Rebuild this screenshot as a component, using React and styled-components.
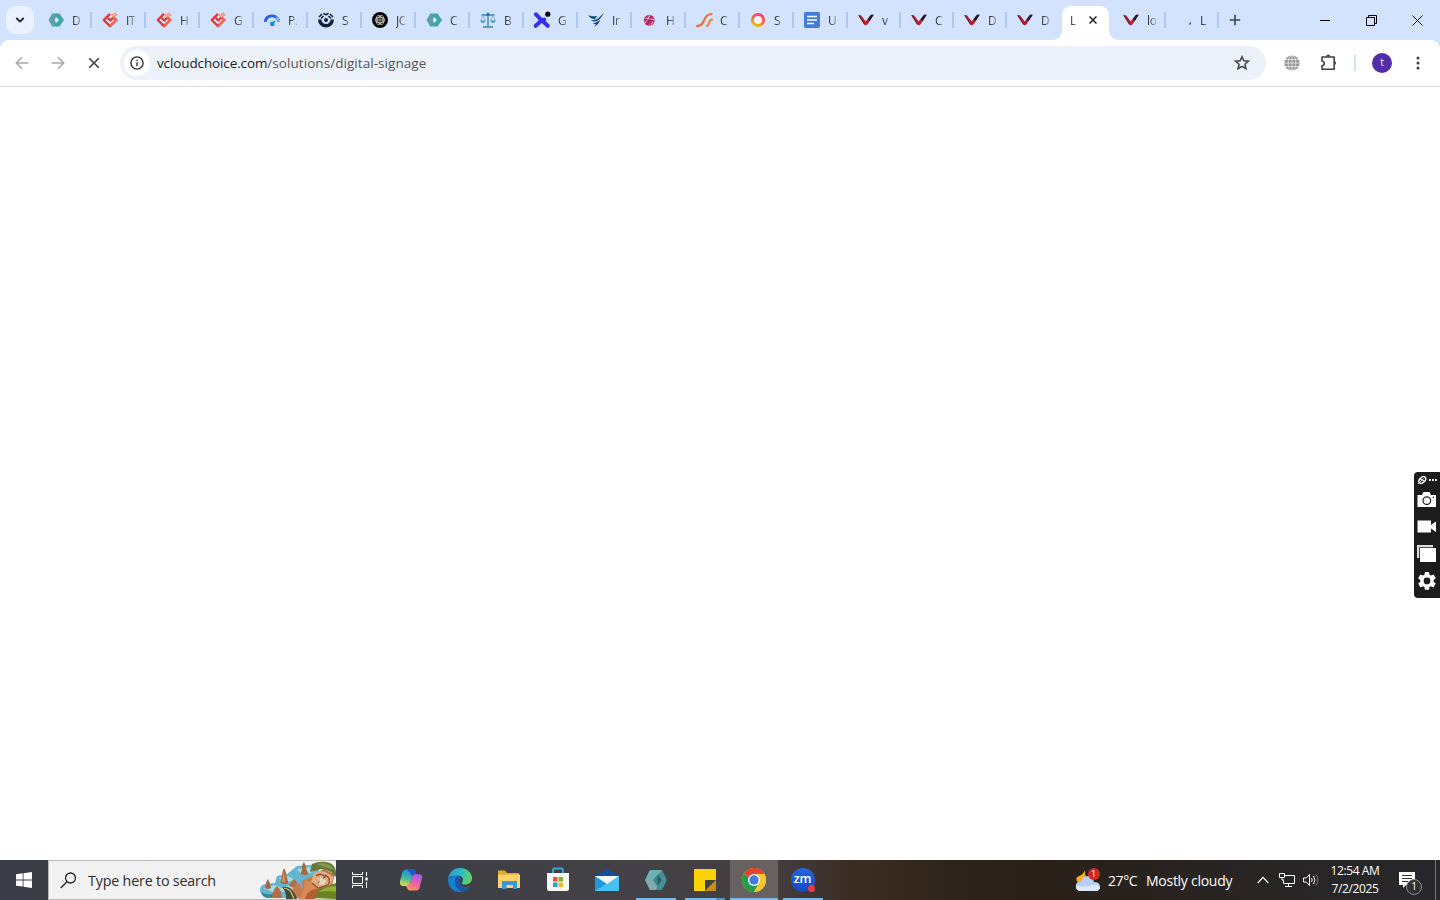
import styled, { createGlobalStyle } from "styled-components";

const GlobalStyle = createGlobalStyle`
  * {
    box-sizing: border-box;
  }
  body {
    margin: 0;
    overflow: hidden;
    font-family: "Open Sans", "Noto Sans", sans-serif;
  }
  svg {
    display: block;
    flex: none;
  }
`;

const Hexagon = () => (
  <svg width="16" height="16" viewBox="0 0 16 16">
    <path d="M4.5 1.5h7L16 8l-4.5 6.5h-7L.5 8z" fill="#3fa5a5" />
    <path d="M1 8l3.5-6.5L8 4v8l-3.5 2.5z" fill="#5b9fa8" />
    <path d="M8 5l3 3-3 3-1.2-3z" fill="#d9f3f4" />
  </svg>
);

const RedDiamond = () => (
  <svg width="16" height="16" viewBox="0 0 16 16" fill="none">
    <path d="M8 1.8L1.8 8 8 14.2 14.2 8l-2.700-2.700L8.300 8.500 5.800 6" stroke="#e2373b" strokeWidth="2.4" strokeLinejoin="round" />
    <path d="M8 14.2L14.2 8l-2.700-2.700" stroke="#ee6a4a" strokeWidth="2.4" />
    <path d="M9 3.500L14 1M10.500 5l5-2.500" stroke="#f29a74" strokeWidth="1.4" />
  </svg>
);

const Gauge = () => (
  <svg width="16" height="16" viewBox="0 0 16 16" fill="none">
    <path d="M1 10C2.5 2.5 12.5 1.5 15 9.5" stroke="#2362e8" strokeWidth="2.8" />
    <path d="M12 5.500q2.300 1.500 3 4" stroke="#83aafa" strokeWidth="2.8" />
    <path d="M4.500 11.500a4 4 0 017.300-1" stroke="#bcd5ff" strokeWidth="1.3" />
    <circle cx="8.300" cy="12" r="2.300" fill="#168cd8" />
    <path d="M8.500 12l2.300-3" stroke="#168cd8" strokeWidth="1.5" />
  </svg>
);

const People = () => (
  <svg width="16" height="16" viewBox="0 0 16 16" fill="none">
    <path d="M1.700 7.500a6.300 6.300 0 0012.600 0" stroke="#13213d" strokeWidth="3.4" />
    <path d="M1 5l3-3M5.500 1.300Q8 4 10.500 1.300M12 2l3 3M3 6.500L5.500 4M13 6.500L10.500 4" stroke="#13213d" strokeWidth="1.6" />
    <circle cx="8" cy="8" r="2" fill="#13213d" />
  </svg>
);

const Knot = () => (
  <svg width="16" height="16" viewBox="0 0 16 16" fill="none">
    <circle cx="8" cy="8" r="8" fill="#090909" />
    <g stroke="#d6cfc3" strokeWidth=".8">
      <ellipse cx="8" cy="8" rx="4.900" ry="2.700" />
      <ellipse cx="8" cy="8" rx="4.900" ry="2.700" transform="rotate(60 8 8)" />
      <ellipse cx="8" cy="8" rx="4.900" ry="2.700" transform="rotate(120 8 8)" />
      <circle cx="8" cy="8" r="1.200" />
    </g>
  </svg>
);

const Scales = () => (
  <svg width="16" height="16" viewBox="0 0 16 16" fill="none">
    <path d="M8 .5v14M1.5 3h13M3 15h10" stroke="#3486b5" strokeWidth="1.4" />
    <path d="M3 3L.8 9M3 3l2.4 6M13 3l-2.4 6M13 3l2.2 6" stroke="#68aad0" strokeWidth=".8" />
    <path d="M.3 8.5h5.4Q5 11 3 11T.3 8.5zM10.3 8.5h5.4Q15 11 13 11t-2.7-2.5z" fill="#4b9ac6" />
    <circle cx="8" cy="2.5" r="1.5" fill="#276f9e" />
  </svg>
);

const CrossDot = () => (
  <svg width="18" height="18" viewBox="0 0 18 18" fill="none">
    <path d="M3 3.3l4.2 4.5q1.7 1.6 4 .8M7.2 8.8q1.5 0 3.3 2l4.2 4M2.7 14.8l5-4.6" stroke="#3b2df2" strokeWidth="4" strokeLinecap="round" />
    <circle cx="14.8" cy="3.2" r="2.6" fill="#090a18" />
  </svg>
);

const Wing = () => (
  <svg width="16" height="16" viewBox="0 0 16 16">
    <path d="M0 3.2q5 1.5 9.500.8L6.500 7.500Q2 6.500 0 3.200z" fill="#155380" />
    <path d="M2.500 8q4.500.8 7.500-1.500Q13 4.200 15.800.8 13.500 6.500 9 9q-3 1.500-6.500-1z" fill="#1b4575" />
    <path d="M4.500 11.500Q9 11 12 7.500 11 13 5.500 15q2-1.500 2.500-2.800z" fill="#163d6b" />
  </svg>
);

const Ball = () => (
  <svg width="16" height="16" viewBox="0 0 16 16" fill="none">
    <circle cx="7.3" cy="8.3" r="5.5" fill="#c7376e" />
    <path d="M3 11L8 3M9 13l3.3-6" stroke="#f3bdd5" strokeWidth=".9" />
    <path d="M5 12.5l4.500-8.500M2.500 7.500l9.500 1.500" stroke="#7c285d" strokeWidth="1.1" />
    <path d="M3.500 6.500l8.500 1" stroke="#f3bdd5" strokeWidth=".8" />
  </svg>
);

const Swoosh = () => (
  <svg width="17" height="16" viewBox="0 0 17 16" fill="none">
    <path d="M1 14q5 0 7-5.500 2-6 7.500-6.500" stroke="#eb7038" strokeWidth="2.2" strokeLinecap="round" />
    <path d="M11 13.800q1.500-.5 2-3 .5-2.500 3-3.300" stroke="#f18c42" strokeWidth="2.4" strokeLinecap="round" />
  </svg>
);

const Ring = () => (
  <svg width="16" height="16" viewBox="0 0 16 16" fill="none">
    <defs>
      <linearGradient id="ring" x1=".75" y1="0" x2=".3" y2="1">
        <stop offset="0" stopColor="#f13c87" />
        <stop offset=".5" stopColor="#fa693d" />
        <stop offset="1" stopColor="#e8bd0e" />
      </linearGradient>
    </defs>
    <circle cx="8" cy="8" r="5.6" fill="#fff3f0" stroke="url(#ring)" strokeWidth="3" />
  </svg>
);

const Doc = () => (
  <svg width="16" height="16" viewBox="0 0 16 16">
    <rect width="16" height="16" rx="1.7" fill="#427ddd" />
    <path d="M3 4.5h10M3 8h10M3 11.5h7" stroke="#fff" strokeWidth="1.7" />
  </svg>
);

const Vee = () => (
  <svg width="16" height="16" viewBox="0 0 16 16">
    <path d="M.3 3.3h2.600l4.900 6.200 1 3.500q-1.800.5-2.900-1z" fill="#b81f33" />
    <path d="M.3 3.3h1.400l5.700 9.800q-.8-.2-1.500-1.100z" fill="#6b1a28" />
    <path d="M15.700 2.8h-2.600L7.600 9.500v3.600q1.300.2 2.200-1z" fill="#b81f33" />
    <path d="M15.700 2.8h-2.600l-3.200 3.900 1.700 2.500z" fill="#101c31" />
  </svg>
);

const LoadingDot = () => (
  <svg width="16" height="16" viewBox="0 0 16 16">
    <path d="M13 12l1.800-2.600V12l-1 1z" fill="#28476d" />
  </svg>
);

const leftTabs = [
  { icon: Hexagon, title: "D" },
  { icon: RedDiamond, title: "IT" },
  { icon: RedDiamond, title: "H" },
  { icon: RedDiamond, title: "G" },
  { icon: Gauge, title: "P." },
  { icon: People, title: "S" },
  { icon: Knot, title: "JO" },
  { icon: Hexagon, title: "C" },
  { icon: Scales, title: "B" },
  { icon: CrossDot, title: "G" },
  { icon: Wing, title: "Ir" },
  { icon: Ball, title: "H" },
  { icon: Swoosh, title: "C" },
  { icon: Ring, title: "S" },
  { icon: Doc, title: "U" },
  { icon: Vee, title: "v", narrow: true },
  { icon: Vee, title: "C", narrow: true },
  { icon: Vee, title: "D", narrow: true },
  { icon: Vee, title: "D", narrow: true, last: true },
];

const rightTabs = [
  { icon: Vee, title: "lo", narrow: true },
  { icon: LoadingDot, title: "L", narrow: true },
];

const TabItem = ({ icon: Icon, title, narrow, last }) => (
  <Tab $narrow={narrow} $last={last}>
    <Favicon>
      <Icon />
    </Favicon>
    <TabTitle>{title}</TabTitle>
  </Tab>
);

const BrowserTabs = () => (
  <TabStrip>
    <TabSearch>
      <svg width="10" height="6" viewBox="0 0 10 6" fill="none">
        <path d="M1.3 1L5 4.6 8.7 1" stroke="#1d1f24" strokeWidth="1.8" />
      </svg>
    </TabSearch>
    {leftTabs.map((tab, index) => (
      <TabItem key={index} {...tab} />
    ))}
    <ActiveTab>
      <ActiveTitle>L</ActiveTitle>
      <svg width="8" height="8" viewBox="0 0 8 8">
        <path d="M.5.5l7 7M7.500.5l-7 7" stroke="#202124" strokeWidth="1.5" />
      </svg>
    </ActiveTab>
    {rightTabs.map((tab, index) => (
      <TabItem key={index} {...tab} />
    ))}
    <NewTab>
      <svg width="12" height="12" viewBox="0 0 12 12">
        <path d="M6 .8v10.400M.8 6h10.400" stroke="#3b4552" strokeWidth="1.6" />
      </svg>
    </NewTab>
    <WindowButtons>
      <svg width="11" height="11" viewBox="0 0 11 11">
        <path d="M0 5.500h10" stroke="#000" />
      </svg>
      <svg width="11" height="11" viewBox="0 0 11 11" fill="none">
        <path d="M.5 2.500h8v8h-8zM2.500 2.500v-2h8v8h-2" stroke="#000" />
      </svg>
      <svg width="11" height="11" viewBox="0 0 11 11">
        <path d="M.5.5l10 10M10.500.5l-10 10" stroke="#111" />
      </svg>
    </WindowButtons>
  </TabStrip>
);

const BrowserToolbar = () => (
  <ToolbarBack>
    <Toolbar>
      <NavButtons>
        <svg width="14" height="14" viewBox="0 0 14 14" fill="none">
          <path d="M13.5 7H1.500M7 1.300L1.300 7 7 12.700" stroke="#a6a8ab" strokeWidth="1.5" />
        </svg>
        <svg width="14" height="14" viewBox="0 0 14 14" fill="none">
          <path d="M.5 7h12M7 1.300L12.700 7 7 12.700" stroke="#a6a8ab" strokeWidth="1.5" />
        </svg>
        <svg width="14" height="14" viewBox="0 0 14 14" fill="none">
          <path d="M2.200 2.200l9.600 9.600M11.800 2.200l-9.600 9.600" stroke="#3c4043" strokeWidth="1.6" />
        </svg>
      </NavButtons>
      <AddressBar>
        <SiteInfo>
          <svg width="14" height="14" viewBox="0 0 14 14" fill="none">
            <circle cx="7" cy="7" r="6.1" stroke="#303236" strokeWidth="1.4" />
            <path d="M7 6.200v4M7 3.700v1.400" stroke="#303236" strokeWidth="1.4" />
          </svg>
        </SiteInfo>
        <Url>
          <Host>vcloudchoice.com</Host>/solutions/digital-signage
        </Url>
        <svg width="16" height="16" viewBox="0 0 16 16" fill="none">
          <path
            d="M8 1.700l1.800 4.100 4.600.4-3.500 3 1.100 4.500L8 11.300l-4 2.400 1.100-4.500-3.500-3 4.600-.4z"
            stroke="#3e4146"
            strokeWidth="1.5"
          />
        </svg>
      </AddressBar>
      <Extensions>
        <svg width="16" height="16" viewBox="0 0 16 16" fill="none">
          <circle cx="8" cy="8" r="7.6" fill="#949494" />
          <path d="M1 4.500h14M.5 8h15M1 11.500h14M8 0v16" stroke="#ececec" strokeWidth=".8" />
          <ellipse cx="8" cy="8" rx="3.9" ry="7.6" stroke="#ececec" strokeWidth=".8" />
        </svg>
        <svg width="18" height="18" viewBox="0 0 18 18" fill="none">
          <path
            d="M2 3h12.200v12.200H2v-3.400q2.200-.5 2.200-2.400T2 7z"
            stroke="#3e4146"
            strokeWidth="1.6"
            strokeLinejoin="round"
          />
          <path d="M6.200 2.800a2 2.200 0 014 0zM14.500 7a2.200 2.200 0 010 4.200z" fill="#3e4146" />
        </svg>
        <Separator />
        <Avatar>t</Avatar>
        <svg width="4" height="16" viewBox="0 0 4 16" fill="#3b3d40">
          <circle cx="2" cy="3" r="1.5" />
          <circle cx="2" cy="8" r="1.5" />
          <circle cx="2" cy="13" r="1.5" />
        </svg>
      </Extensions>
    </Toolbar>
  </ToolbarBack>
);

const CaptureTools = () => (
  <CapturePanel>
    <svg width="20" height="10" viewBox="0 0 20 10" fill="none">
      <ellipse cx="5.3" cy="5" rx="4" ry="2.6" transform="rotate(-45 5.3 5)" stroke="#fff" strokeWidth="1.4" />
      <path d="M2.300 3.500l5 2.500M3.200 7l3.500-3.500M1.200 9l2-2" stroke="#fff" />
      <path d="M12 5h1.800M15 5h1.800M18 5h1.800" stroke="#fff" strokeWidth="1.8" />
    </svg>
    <svg width="20" height="18" viewBox="0 0 20 18">
      <path d="M.5 4H5l1.500-3h6L14 4h5v12H.5z" fill="#fff" />
      <circle cx="9.8" cy="9.7" r="3.8" fill="#fff" stroke="#222" strokeWidth="1.3" />
      <circle cx="16.4" cy="6.3" r=".8" fill="#222" />
    </svg>
    <svg width="20" height="18" viewBox="0 0 20 18" fill="#fff">
      <path d="M.5 2.500H14V7l5-3.500V14l-5-3.500v4H.5z" />
    </svg>
    <svg width="20" height="18" viewBox="0 0 20 18">
      <path d="M0 0h16v2.200H2.200V13H0z" fill="#ddd" />
      <path d="M3 3h16v14H3z" fill="#fff" />
    </svg>
    <svg width="20" height="20" viewBox="0 0 24 24" fill="#fff">
      <path d="M19.900 12.900l.1-1-.1-1 2.300-1.800c.2-.2.3-.5.1-.7l-2.200-3.800c-.1-.2-.4-.3-.7-.2l-2.700 1.100-1.800-1-.4-2.800c0-.3-.3-.5-.5-.5h-4c-.3 0-.5.2-.6.5L9 4.500l-1.800 1-2.700-1.100c-.3-.1-.6 0-.7.2L1.600 8.400c-.1.2-.1.5.1.7L4 10.900v2l-2.300 1.800c-.2.2-.2.5-.1.7l2.200 3.800c.1.2.4.3.7.2l2.700-1.100 1.800 1 .4 2.800c.1.3.3.5.6.5h4c.2 0 .5-.2.5-.5l.4-2.800 1.800-1 2.700 1.100c.3.1.6 0 .7-.2l2.200-3.800c.2-.2.1-.5-.1-.7zM12 15.900a4 4 0 110-8 4 4 0 010 8z" />
    </svg>
  </CapturePanel>
);

const Copilot = () => (
  <svg width="24" height="24" viewBox="0 0 24 24">
    <defs>
      <linearGradient id="copilotA" x1=".5" y1="0" x2=".3" y2="1">
        <stop offset="0" stopColor="#2187e9" />
        <stop offset=".5" stopColor="#39b8a0" />
        <stop offset="1" stopColor="#efd44c" />
      </linearGradient>
      <linearGradient id="copilotB" x1=".7" y1="0" x2=".3" y2="1">
        <stop offset="0" stopColor="#a35af3" />
        <stop offset=".55" stopColor="#ee62a3" />
        <stop offset="1" stopColor="#fb9857" />
      </linearGradient>
    </defs>
    <path d="M7 1.500h7q2 0 2.700 2L17.500 7H15q-1.500 0-2 2l-2 6.500q-.8 2.500-3 2.500H3.500Q.4 17.500 1 13L3.500 4Q4.300 1.500 7 1.500z" fill="url(#copilotA)" />
    <path d="M7 1.500h7q2 0 2.700 2L17.500 7H15q-1.300 0-1.800 1.500Q11 3 7 1.500z" fill="#1f57c4" />
    <path d="M17 22.500h-6q-2 0-2.800-2L7 17.800q3 .5 4-1.800l2-7q.8-2.800 3-2.800h4.500q3.300 0 2.500 4L20.500 20q-.8 2.500-3.500 2.500z" fill="url(#copilotB)" />
  </svg>
);

const Edge = () => (
  <svg width="26" height="26" viewBox="0 0 26 26">
    <defs>
      <linearGradient id="edgeTop" x1="0" y1=".3" x2="1" y2=".5">
        <stop offset="0" stopColor="#229bd8" />
        <stop offset=".55" stopColor="#33bcc2" />
        <stop offset="1" stopColor="#63d557" />
      </linearGradient>
    </defs>
    <path d="M1 12a12 12 0 0012 13c4.500 0 8-2 10-5.500-3 1.500-6 1.200-8.500-.5-2.500-2-3-5-1-7.500L10 6.500z" fill="#1580d0" />
    <path d="M9.500 9c-3.500 5.500-1 14 6 15.800 3.500-.8 6-2.800 7.500-5.300-3 1.500-6 1.200-8.500-.5-2.500-2-3-5-1-7.500z" fill="#1b55a8" />
    <path d="M1 12C2 4 8 1 13 1c8 0 12 6 12 10 0 5-4 6.500-7 6.500-4 0-3.500-1.500-2.500-3 1.500-3-1-6-4.500-6-5 0-9 1-10 3.500z" fill="url(#edgeTop)" />
  </svg>
);

const Folder = () => (
  <svg width="24" height="22" viewBox="0 0 24 22">
    <path d="M1 1.500h7l2 2.500h12v15H1z" fill="#e6a62b" />
    <path d="M1 5.500h22V19H1z" fill="#fbd368" />
    <path d="M5 12h15v8h-4v-4H9.500v4H5z" fill="#3b94dc" />
  </svg>
);

const Store = () => (
  <svg width="24" height="26" viewBox="0 0 24 26">
    <path d="M7 7V3q0-1.500 1.500-1.500h7Q17 1.500 17 3v4" fill="none" stroke="#35a9dc" strokeWidth="1.8" />
    <path d="M1 6h22v15.500q0 2.500-2.500 2.500h-17Q1 24 1 21.500z" fill="#f7f7f7" />
    <path d="M7 10h4.500v4.500H7z" fill="#ec542c" />
    <path d="M12.500 10H17v4.500h-4.500z" fill="#80b530" />
    <path d="M7 15.500h4.500V20H7z" fill="#29a1df" />
    <path d="M12.500 15.500H17V20h-4.500z" fill="#f2b526" />
  </svg>
);

const Mail = () => (
  <svg width="26" height="24" viewBox="0 0 26 24">
    <path d="M1 8l12-7.500L25 8v4H1z" fill="#134e9f" />
    <path d="M1 8h24v15H1z" fill="#1d9be2" />
    <path d="M1 23l14-9 10-6v15z" fill="#48c2f1" />
    <path d="M1 8h24l-12 8z" fill="#f4f4f4" />
  </svg>
);

const HexApp = () => (
  <svg width="24" height="22" viewBox="0 0 24 22">
    <path d="M6 1h12l5 10-5 10H6L1 11z" fill="#428f96" />
    <path d="M6 1h12l-4 4.500-5 5.500H1z" fill="#6cb0b6" />
    <path d="M1 11h8l4 6-1 4H6z" fill="#80a9b1" />
    <path d="M14 6l3.500 5-3.500 5.500L10.500 11z" fill="#275961" />
    <path d="M14 6v10.500L10.500 11z" fill="#3c7c84" />
  </svg>
);

const Sticky = () => (
  <svg width="24" height="24" viewBox="0 0 24 24">
    <path d="M1 1h22v22H1z" fill="#fbd304" />
    <path d="M23 12v11H12z" fill="#c78f15" />
    <path d="M12 12h11L12 23z" fill="#41413d" />
  </svg>
);

const Chrome = () => (
  <svg width="26" height="26" viewBox="0 0 26 26">
    <circle cx="13" cy="13" r="12" fill="#fac62c" />
    <path d="M13 13L2.600 7a12 12 0 0120.800 0z" fill="#e54234" />
    <path d="M13 13L2.600 7A12 12 0 0013 25l5.200-9z" fill="#269b4b" />
    <path d="M13 7h10.400q1.600 3 1.600 6A12 12 0 0113 25l5.200-9z" fill="#fac62c" />
    <circle cx="13" cy="13" r="6" fill="#fff" />
    <circle cx="13" cy="13" r="4.7" fill="#3b7de5" />
  </svg>
);

const Windows = () => (
  <svg width="16" height="16" viewBox="0 0 16 16" fill="#fff">
    <path d="M0 2.200l6.700-.9v6.200H0zM7.500 1.200L16 0v7.500H7.500zM0 8.400h6.700v6.200L0 13.700zM7.500 8.400H16V16l-8.500-1.200z" />
  </svg>
);

const Landscape = () => (
  <svg width="77" height="38" viewBox="0 0 77 38">
    {/* lake terraces */}
    <path d="M1 30q-1-6 6-7l9-1 2-7 10-2 10-8 14-1 8 5-4 18-22 10H14Q3 37 1 30z" fill="#65b5d0" />
    <path d="M4 27l12-3 6 2-8 5zM20 17l9-2 7 4-10 3zM38 8l13-2 4 5-12 3zM18 28l14-4 8 4-16 3z" fill="#a4dce2" />
    <path d="M2 31q8 5 14 0l-1 6H8Q3 36 2 31z" fill="#38859c" />
    {/* peaks */}
    <path d="M25 7q2 3 2.500 8l2 7q-4 2-8 0l1.500-8Q23.500 9 25 7zM9 18q2 3 3 9-3 2-6 0 1-7 3-9zM45 1q2 3 2.500 8l2 4q-4 2-8 0l1.500-5Q43 3 45 1z" fill="#a96742" />
    <path d="M23 21q1-7 2-12 .5 6 1 12z" fill="#d79560" />
    <path d="M13 36q1-8 5-11 4 3 5 12H13zM30 25q2-5 5-7 3 2 4 8-4 2-9-1z" fill="#b66c43" />
    <path d="M32 30q4-6 8-8 4 5 3 15h-9z" fill="#c97b50" />
    {/* winding road */}
    <path d="M23 26q7-1 10 3 4 4 5 9H27q1-6-4-12z" fill="#424a45" />
    <path d="M25 27q5 1 7 4l3 7" fill="none" stroke="#e9c63d" strokeWidth="1.2" />
    {/* resting figure */}
    <path d="M43 20l13-6 8-6 12 5-3 12-17 13H40q5-7 3-18z" fill="#c77849" />
    <path d="M46 18q5 5 9 3l4 8-11 9H40q6-8 6-20z" fill="#d98a55" />
    <path d="M55 12q8-4 15 1l5 4-5 9-10 1-8-6z" fill="#dfae82" />
    <path d="M57 15q5-4 9 1l-7 6M66 14q7 3 3 10l-9 3M53 22l6 5" fill="none" stroke="#914e36" strokeWidth="1.4" />
    <path d="M61 16l6 3-2 5-5-1z" fill="#e5d6c2" />
    {/* hillside */}
    <path d="M53 3q9-4 18-1 7 3 6 14l-5-5-9-3-12 3z" fill="#65793a" />
    <path d="M57 3q9-3 15 2l3 4-9-3z" fill="#87984b" />
    <path d="M54 37q-2-6 6-9l17-6v16z" fill="#688420" />
    <path d="M59 31q8-6 18-6v6q-8-2-18 0z" fill="#9aad35" />
    <path d="M48 33q6-6 12-5l-5 10h-9z" fill="#b55d34" />
  </svg>
);

const TaskView = () => (
  <svg width="18" height="18" viewBox="0 0 18 18" fill="none" stroke="#fff">
    <path d="M1.500 1v2.500h10V1M1.500 5.500h10v7h-10zM1.500 17v-2.500h10V17M15.500 1v4M15.500 11v6" />
    <path d="M15.500 6.500v3" strokeWidth="2.5" />
  </svg>
);

const Weather = () => (
  <svg width="28" height="26" viewBox="0 0 28 26">
    <path d="M11 3q-1 8 6 11l-12 3Q-.5 11 5 9q4-1 6-6z" fill="#f7ab22" />
    <path d="M6 24q-5-1-4-6 1-4 5-3 1-6 7-6 5 0 6 6 6 0 6 5 0 4-5 4z" fill="#b5cff6" />
    <path d="M6 24q-5-1-4-6 8 3 16 0 4-1 8 2 0 4-5 4z" fill="#dbe9ff" />
    <circle cx="20" cy="7" r="6" fill="#ce2923" />
  </svg>
);

const apps = [
  { icon: Copilot },
  { icon: Edge },
  { icon: Folder },
  { icon: Store },
  { icon: Mail },
  { icon: HexApp, open: true },
  { icon: Sticky, open: true, stacked: true },
  { icon: Chrome, open: true, active: true },
];

const Taskbar = () => (
  <Bar>
    <StartButton>
      <Windows />
    </StartButton>
    <SearchBox>
      <svg width="17" height="17" viewBox="0 0 17 17" fill="none">
        <circle cx="10.5" cy="6" r="5" stroke="#222" strokeWidth="1.3" />
        <path d="M7 9.700L.7 16" stroke="#222" strokeWidth="1.3" />
      </svg>
      <SearchText>Type here to search</SearchText>
      <Landscape />
    </SearchBox>
    <TaskViewButton>
      <TaskView />
    </TaskViewButton>
    {apps.map(({ icon: Icon, open, active, stacked }, index) => (
      <AppButton key={index} $open={open} $active={active} $stacked={stacked}>
        <Icon />
      </AppButton>
    ))}
    <AppButton $open>
      <Zoom>
        zm
        <ZoomDot />
      </Zoom>
    </AppButton>
    <Tray>
      <WeatherBox>
        <Weather />
        <WeatherCount>1</WeatherCount>
      </WeatherBox>
      <Temperature>27°C</Temperature>
      <Forecast>Mostly cloudy</Forecast>
      <TrayIcons>
        <svg width="12" height="8" viewBox="0 0 12 8" fill="none">
          <path d="M.7 7L6 1.300 11.300 7" stroke="#fff" strokeWidth="1.2" />
        </svg>
        <svg width="17" height="16" viewBox="0 0 17 16" fill="none" stroke="#fff">
          <path d="M5.500 3.500h10v8h-11v-3M9.500 11.500v3M6 14.500h7M.5 1.500h5v4h-5zM3 5.500V8h2" />
        </svg>
        <svg width="17" height="16" viewBox="0 0 17 16" fill="none" stroke="#fff">
          <path d="M.5 6h2.700L6.500 2.500v11L3.200 10H.5z" />
          <path d="M8.500 6q1.500 2 0 4M10.500 4q3 4 0 8" />
          <path d="M13 2.500q4 5.500 0 11" stroke="#777" />
        </svg>
      </TrayIcons>
      <Clock>
        <Time>12:54 AM</Time>
        <Time>7/2/2025</Time>
      </Clock>
      <Notifications>
        <svg width="17" height="17" viewBox="0 0 17 17">
          <path d="M0 0h16v13H7l-3 3v-3H0z" fill="#fff" />
          <path d="M3 3.500h10M3 6.500h10M3 9.500h6" stroke="#333" />
        </svg>
        <NotificationCount>1</NotificationCount>
      </Notifications>
    </Tray>
  </Bar>
);

const App = () => {
  return (
    <Screen>
      <GlobalStyle />
      <BrowserTabs />
      <BrowserToolbar />
      <PageArea>
        <CaptureTools />
      </PageArea>
      <Taskbar />
    </Screen>
  );
};

const Screen = styled.div`
  display: flex;
  flex-direction: column;
  width: 1440px;
  height: 900px;
  background-color: #fff;
`;

const TabStrip = styled.div`
  display: flex;
  align-items: center;
  height: 40px;
  padding-left: 6px;
  background-color: #d3e3fd;
`;

const TabSearch = styled.div`
  display: flex;
  align-items: center;
  justify-content: center;
  width: 28px;
  height: 28px;
  margin-right: 4px;
  border-radius: 9px;
  background-color: #e9f1fe;
`;

const Tab = styled.div`
  display: flex;
  align-items: center;
  flex: none;
  width: ${({ $narrow }) => ($narrow ? 53 : 54)}px;
  height: 16px;
  padding-left: 10px;
  border-right: 2px solid ${({ $last }) => ($last ? "transparent" : "#abc7f5")};
`;

const Favicon = styled.div`
  display: flex;
  align-items: center;
  justify-content: center;
  width: 16px;
  height: 16px;
  margin-right: 8px;
`;

const TabTitle = styled.div`
  width: 9px;
  padding-top: 1px;
  overflow: hidden;
  white-space: nowrap;
  font-size: 12px;
  line-height: 16px;
  letter-spacing: -0.4px;
  color: #30333a;
  mask-image: linear-gradient(to right, #000 25%, rgba(0, 0, 0, 0.3));
`;

const ActiveTab = styled.div`
  position: relative;
  display: flex;
  align-items: center;
  flex: none;
  width: 47px;
  height: 34px;
  margin: 6px 4px 0 2px;
  padding: 0 0 6px 8px;
  border-radius: 9px 9px 0 0;
  background-color: #fff;
  &::before,
  &::after {
    content: "";
    position: absolute;
    bottom: 0;
    width: 9px;
    height: 9px;
  }
  &::before {
    left: -9px;
    background: radial-gradient(circle at 0 0, transparent 8.5px, #fff 9px);
  }
  &::after {
    right: -9px;
    background: radial-gradient(circle at 100% 0, transparent 8.5px, #fff 9px);
  }
`;

const ActiveTitle = styled(TabTitle)`
  width: 7px;
  margin-right: 12px;
`;

const NewTab = styled.div`
  margin-left: 10px;
`;

const WindowButtons = styled.div`
  display: flex;
  gap: 35px;
  margin-left: auto;
  padding-right: 17px;
`;

const ToolbarBack = styled.div`
  background-color: #d3e3fd;
`;

const Toolbar = styled.div`
  display: flex;
  align-items: center;
  height: 47px;
  border-bottom: 1px solid #dcdddf;
  border-radius: 9px 9px 0 0;
  background-color: #fff;
`;

const NavButtons = styled.div`
  display: flex;
  gap: 22px;
  padding: 0 19px 0 15px;
`;

const AddressBar = styled.div`
  display: flex;
  align-items: center;
  width: 1146px;
  height: 34px;
  padding: 0 16px 0 4px;
  border-radius: 17px;
  background-color: #edf1f9;
`;

const SiteInfo = styled.div`
  display: flex;
  align-items: center;
  justify-content: center;
  width: 26px;
  height: 26px;
  margin-right: 7px;
  border-radius: 50%;
  background-color: #fff;
`;

const Url = styled.div`
  flex: 1;
  font-size: 13.5px;
  letter-spacing: 0.06px;
  color: #515459;
`;

const Host = styled.span`
  letter-spacing: -0.12px;
  color: #202124;
`;

const Extensions = styled.div`
  display: flex;
  align-items: center;
  margin-left: 18px;
  & > svg:nth-child(2) {
    margin-left: 20px;
  }
`;

const Separator = styled.div`
  width: 2px;
  height: 16px;
  margin: 0 16px;
  background-color: #d3e2fa;
`;

const Avatar = styled.div`
  width: 20px;
  height: 20px;
  margin-right: 24px;
  border-radius: 50%;
  background-color: #512da8;
  color: #f0e8ff;
  font-size: 10.5px;
  line-height: 19px;
  text-align: center;
`;

const PageArea = styled.div`
  display: flex;
  flex: 1;
  justify-content: flex-end;
  padding-top: 385px;
`;

const CapturePanel = styled.div`
  display: flex;
  flex-direction: column;
  align-items: center;
  gap: 9px;
  width: 26px;
  height: 126px;
  padding-top: 3px;
  border-radius: 4px 0 0 4px;
  background-color: #1c1c1d;
  & > svg:nth-child(2) {
    margin-top: -3px;
  }
  & > svg:last-child {
    margin-top: -1px;
  }
`;

const Bar = styled.div`
  display: flex;
  height: 40px;
  background: linear-gradient(
    to right,
    #3a3c45 0,
    #3d3e46 400px,
    #444247 640px,
    #433c3d 780px,
    #3a2d24 850px,
    #2f241b 950px,
    #292019 1060px,
    #282422 1200px,
    #27272b 1440px
  );
`;

const StartButton = styled.div`
  display: flex;
  align-items: center;
  justify-content: center;
  width: 48px;
`;

const SearchBox = styled.div`
  display: flex;
  align-items: center;
  width: 288px;
  padding-left: 11px;
  border: 1px solid #b8b8b9;
  border-right: 0;
  background-color: #f2f2f2;
`;

const SearchText = styled.div`
  flex: 1;
  margin-left: 11px;
  font-size: 14.3px;
  letter-spacing: -0.19px;
  white-space: nowrap;
  color: #2c2c2c;
`;

const TaskViewButton = styled.div`
  display: flex;
  align-items: center;
  justify-content: center;
  flex: none;
  width: 48px;
  margin-right: 2px;
`;

const AppButton = styled.div`
  position: relative;
  display: flex;
  align-items: center;
  justify-content: center;
  flex: none;
  width: ${({ $active }) => ($active ? 48 : 49)}px;
  margin-left: ${({ $active }) => ($active ? 1 : 0)}px;
  background-color: ${({ $active }) => ($active ? "#676160" : "transparent")};
  &::after {
    content: "";
    position: absolute;
    bottom: 0;
    left: ${({ $active }) => ($active ? 0 : 5)}px;
    right: ${({ $active }) => ($active ? 0 : 4)}px;
    height: 2px;
    background: ${({ $open, $stacked }) =>
      !$open
        ? "none"
        : $stacked
          ? "linear-gradient(to right, #79b7e8 32px, #4a6478 32px, #4a6478 33px, #5d8fb6 33px)"
          : "#79b7e8"};
  }
`;

const Zoom = styled.div`
  position: relative;
  width: 24px;
  height: 24px;
  border-radius: 50%;
  background: linear-gradient(#2864df, #124bc4);
  color: #fff;
  font-size: 12.5px;
  font-weight: 600;
  line-height: 21px;
  letter-spacing: -0.3px;
  text-align: center;
`;

const ZoomDot = styled.span`
  position: absolute;
  right: 0;
  bottom: 0;
  width: 7px;
  height: 7px;
  border-radius: 50%;
  background-color: #f13a3d;
`;

const Tray = styled.div`
  display: flex;
  align-items: center;
  margin-left: auto;
  border-right: 1px solid #77777a;
  margin-right: 4px;
  color: #fff;
`;

const WeatherBox = styled.div`
  position: relative;
  margin-right: 6px;
`;

const WeatherCount = styled.span`
  position: absolute;
  top: 1px;
  left: 17px;
  font-size: 9px;
  line-height: 12px;
`;

const Temperature = styled.div`
  width: 38px;
  font-size: 14px;
  letter-spacing: -0.4px;
`;

const Forecast = styled.div`
  width: 111px;
  font-size: 14px;
  letter-spacing: -0.27px;
  white-space: nowrap;
`;

const TrayIcons = styled.div`
  display: flex;
  align-items: center;
  gap: 10px;
  margin-right: 9px;
  & > svg:nth-child(2) {
    margin-right: -3px;
  }
`;

const Clock = styled.div`
  width: 52px;
  text-align: center;
`;

const Time = styled.div`
  font-size: 12px;
  line-height: 18px;
  letter-spacing: -0.4px;
  white-space: nowrap;
`;

const Notifications = styled.div`
  position: relative;
  width: 36px;
  margin-left: 18px;
`;

const NotificationCount = styled.div`
  position: absolute;
  top: 7px;
  left: 7px;
  width: 16px;
  height: 16px;
  border: 1px solid #929295;
  border-radius: 50%;
  background-color: #303033;
  font-size: 10px;
  line-height: 13px;
  text-align: center;
`;

export default App;
